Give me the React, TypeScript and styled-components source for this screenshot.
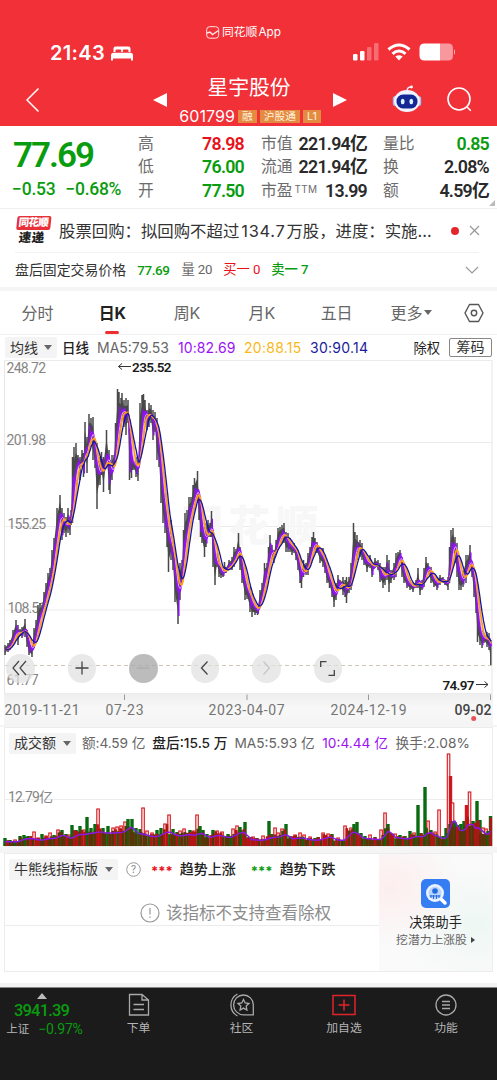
import React from "react";
import styled, { createGlobalStyle } from "styled-components";

const GREEN = "#0a9c0f";
const RED = "#e8111a";
const num = `Roboto, "Noto Sans CJK SC", sans-serif`;
const ui = `Inter, "Noto Sans CJK SC", sans-serif`;

const Global = createGlobalStyle`
  * { box-sizing: border-box; }
  body { margin: 0; background: #fff; font-family: ${ui}; }
  svg { display: block; flex: none; }
`;

const Screen = styled.div`
  width: 497px; height: 1080px; overflow: hidden; background: #fff;
  display: flex; flex-direction: column;
`;

type TextProps = { $size?: number; $color?: string; $weight?: number; $ls?: number; $num?: boolean; $ml?: number; $pt?: number };
const Text = styled.span<TextProps>`
  font-family: ${(p) => (p.$num ? num : ui)};
  font-size: ${(p) => p.$size ?? 14}px;
  color: ${(p) => p.$color ?? "#333"};
  font-weight: ${(p) => p.$weight ?? 400};
  letter-spacing: ${(p) => p.$ls ?? 0}px;
  margin-left: ${(p) => p.$ml ?? 0}px;
  padding-top: ${(p) => p.$pt ?? 0}px;
  line-height: 20px; white-space: nowrap;
`;

/* header */
const Header = styled.header`
  height: 126px; background: #f13038; color: #fff; display: flex; flex-direction: column; flex: none;
`;
const Status = styled.div`
  height: 68px; display: grid; grid-template-columns: 206px 1fr 144px; padding-top: 22px;
`;
const StatusLeft = styled.div`display: flex; align-items: center; padding: 14px 0 0 50px; height: 48px; gap: 6px;`;
const StatusMid = styled.div`display: flex; align-items: center; height: 20px; gap: 2px;`;
const StatusRight = styled.div`display: flex; align-items: center; padding-top: 14px; height: 46px;`;
const TitleBar = styled.div`
  height: 58px; display: grid; grid-template-columns: 153px 194px 150px; align-items: center;
`;
const Back = styled.div`padding-left: 26px; padding-top: 6px;`;
const Center = styled.div`display: flex; align-items: center; justify-content: space-between;`;
const Names = styled.div`display: flex; flex-direction: column; align-items: center; height: 54px;`;
const Title = styled.div`font: 400 20.8px/33px ${ui}; margin-left: -2px; padding-top: 1px;`;
const CodeRow = styled.div`display: flex; align-items: center; gap: 3px; height: 20px; margin-top: 2px;`;
const Tag = styled.span`
  height: 13px; line-height: 13px; padding: 0 4px; background: #e58a41; color: #fff3df; font-size: 10.7px;
  &:first-of-type { margin-left: 3px; }
`;
const Tools = styled.div`display: flex; align-items: center; gap: 25px; padding: 4px 0 0 45px;`;

/* quote */
const Quote = styled.section`
  height: 83px; flex: none; display: grid; grid-template-columns: 126px 106px 105px 106px;
  padding-left: 12px; column-gap: 0; position: relative; border-bottom: 1px solid #f0f0f0;
`;
const PriceBox = styled.div`display: flex; flex-direction: column; padding-top: 10px;`;
const Price = styled.div`
  font: 600 35px/40px ${num}; letter-spacing: -2px; color: ${GREEN}; padding-left: 1px;
`;
const Change = styled.div`display: flex; gap: 10px; margin-top: 3px;`;
const Col = styled.div<{ $ml: number }>`
  margin-left: ${(p) => p.$ml}px; width: 106px; display: flex; flex-direction: column; padding-top: 6.5px;
`;
const Cell = styled.div`display: flex; justify-content: space-between; align-items: center; height: 23.3px;`;
const Sup = styled.sup`font: 400 10px/10px ${ui}; vertical-align: 3px; margin-left: 2px; letter-spacing: .3px;`;
const Corner = styled.div`
  position: absolute; right: 2px; bottom: 2px; border-left: 6px solid transparent; border-bottom: 6px solid #bbb;
`;

const News = styled.section`
  height: 43px; flex: none; display: flex; align-items: center; padding: 0 17px 0 15px;
`;
const Logo = styled.div`width: 35px; height: 30px; display: flex; flex-direction: column; align-items: center; transform: skewX(-6deg);`;
const LogoTop = styled.div`
  width: 34px; height: 14px; border-radius: 2px; background: #e8303a; color: #fff;
  font: 900 10.5px/13px ${ui}; letter-spacing: -.7px; text-align: center;
`;
const LogoBottom = styled.div`font: 900 12.5px/15px ${ui}; color: #222; letter-spacing: .5px;`;
const Dot = styled.i`width: 8px; height: 8px; border-radius: 50%; background: #e3262c; margin-left: auto; margin-right: 10px;`;
const After = styled.section`
  height: 35px; flex: none; display: flex; align-items: center; margin: 0 18px 0 15px; border-top: 1px solid #f3f3f3;
`;
const Band = styled.div<{ $h: number }>`height: ${(p) => p.$h}px; background: #f5f5f5; flex: none;`;

const Tabs = styled.nav`height: 44px; flex: none; display: flex; padding: 0 13px 0 0; border-bottom: 1px solid #f0f0f0;`;
const Tab = styled.div<{ $on?: boolean }>`
  width: 74.8px; display: flex; align-items: center; justify-content: center; position: relative;
  font: ${(p) => (p.$on ? 700 : 400)} 16px/20px ${ui}; color: ${(p) => (p.$on ? "#222" : "#666")};
  letter-spacing: -.2px; gap: 2px;
  &::after { content: ""; display: ${(p) => (p.$on ? "block" : "none")}; position: absolute; bottom: 0; width: 14px; height: 3px; border-radius: 2px; background: #ee2f31; }
`;
const TabEnd = styled.div`margin-left: auto; display: flex; align-items: center;`;

const Legend = styled.div`height: 25px; flex: none; display: flex; align-items: center; padding: 0 5px;`;
const Picker = styled.div<{ $w: number; $h: number }>`
  width: ${(p) => p.$w}px; height: ${(p) => p.$h}px; background: #f4f4f4; display: flex; align-items: center; justify-content: space-between;
  padding: 0 5px 0 5px; border-radius: 2px; font: 400 14px/20px ${ui}; color: #333; white-space: nowrap; flex: none;
`;
const Caret = styled.i`border: 4px solid transparent; border-top: 5px solid #666; border-bottom: 0;`;
const Chips = styled.div`
  width: 43px; height: 19px; border: 1px solid #888; border-radius: 2px; font: 400 14px/16px ${ui}; text-align: center; color: #333; margin-left: 9px;
`;

const ChartBox = styled.section`height: 365px; flex: none; position: relative;`;
const Controls = styled.div`position: absolute; left: 6px; top: 294px; display: flex; gap: 33px;`;
const Round = styled.div<{ $dark?: boolean }>`
  width: 28.5px; height: 28.5px; border-radius: 50%; background: ${(p) => (p.$dark ? "rgba(165,165,165,.75)" : "rgba(225,225,225,.72)")};
  display: flex; align-items: center; justify-content: center;
`;

const Panel = styled.section<{ $h: number }>`
  height: ${(p) => p.$h}px; flex: none; margin: 0 4px; border: 1px solid #ececec; position: relative;
`;
const PanelHead = styled.div`display: flex; align-items: center; height: 30px; padding-left: 4px;`;
const VolPlot = styled.div`margin-left: -5px; margin-top: -29px;`;
const Indicator = styled.div`display: grid; grid-template-columns: 1fr 113px; height: 117px;`;
const Left = styled.div`display: flex; flex-direction: column;`;
const Notice = styled.div`
  height: 42px; border-bottom: 1px solid #ececec; display: flex; align-items: center; padding-left: 135px; padding-top: 17px; padding-bottom: 0; gap: 6px;
`;
const Promo = styled.div`
  background: radial-gradient(ellipse at 10% 28%, #fdeeee 0, transparent 50%), radial-gradient(ellipse at 85% 60%, #eef7f3 0, transparent 60%), #fafafa;
  display: flex; flex-direction: column; align-items: center; padding-top: 25px;
`;
const PromoSub = styled.div`display: flex; align-items: center; gap: 4px; margin-top: -2px;`;
const Right = styled.i<{ $s: number; $c: string }>`
  border: ${(p) => p.$s}px solid transparent; border-left: ${(p) => p.$s * 1.2}px solid ${(p) => p.$c}; border-right: 0;
`;

const BottomBand = styled.div`height: 15px; flex: none; background: linear-gradient(#fff 0 11px, #f2f2f2 11px);`;
const Nav = styled.footer`
  flex: 1; background: #1b1b1b; display: grid; grid-template-columns: 87px 103px 103px 102px 102px; border-top: 1px solid #888;
`;
const Index = styled.div`display: flex; flex-direction: column; align-items: center; padding-top: 5px; width: 83px;`;
const Up = styled.i`border: 5px solid transparent; border-bottom: 6px solid #bbb; border-top: 0;`;
const IndexSub = styled.div`margin: -2px 0 0 6px; display: flex; align-items: center; gap: 9px;`;
const NavItem = styled.div`display: flex; flex-direction: column; align-items: center; padding-top: 5px; gap: 1px;`;

// samples: x, high y, low y
const K = `5 645 655,8 643 652,10 640 650,13 630 646,16 620 638,18 625 645,20 629 636,22 627 638,25 619 637,27 630 647,29 640 655,32 645 657,34 628 648,36 620 643,38 605 637,40 603 623,42 605 617,44 592 608,46 583 604,48 573 597,50 568 590,52 550 580,54 538 562,57 508 547,60 495 523,62 508 540,64 513 533,66 517 537,68 508 533,70 517 535,71 510 525,72.5 457 523,74 447 507,76 443 487,78 455 467,80 457 480,82 450 467,83.5 453 477,85 422 460,87 437 473,89 414 453,91 418 443,93 417 460,95 443 468,97 443 509,100 457 485,101.5 452 475,103.5 457 492,106.5 430 467,109 450 490,110 460 494,112 455 480,114 455 467,115.5 423 463,117.5 389 453,119 392 440,121 398 427,122 393 420,124 400 427,126 398 435,128 400 423,129.5 430 480,131.5 447 478,133 457 470,136 457 477,138 460 481,140 403 460,142 395 443,143.5 394 427,145 400 423,147 410 430,149 403 427,151 405 423,153 410 440,155 412 432,157 418 460,159 433 467,161 460 503,163 477 523,165 493 533,167 507 547,168.5 520 572,171 520 560,173 547 570,175 557 602,178 570 624,180 563 600,182 560 583,183.5 530 563,185 513 557,187 510 547,189 497 530,191 497 520,193 485 513,194.5 478 510,197.5 471 503,199 493 520,200.5 503 537,202 523 543,204.5 527 557,206 523 547,208 520 537,210 523 537,211.5 511 537,213 530 567,215 550 585,217 553 567,219 560 577,221 567 578,223 570 577,224.5 562 573,226 567 573,229 560 570,232 557 570,234 547 567,236 549 560,238.5 533 557,240 547 570,242 557 583,245 577 600,247 581 599,250 587 612,252 593 617,255 603 615,257.5 607 615,260 590 607,262 583 603,264.5 563 590,267 563 580,268.5 547 563,270 535 563,272 545 560,274 550 563,276 540 553,278 528 550,280 527 543,282 525 543,284 523 543,286 532 552,288 533 552,290 538 552,292 543 555,294 543 553,296 548 560,298 553 570,300 563 583,301.5 567 588,303.5 560 577,306 563 575,308 553 575,310 547 560,312 537 553,313.5 532 550,315 538 553,317 542 553,320 548 563,323 548 567,325 560 573,327 567 583,329.5 573 588,332 580 597,334 587 607,336 583 600,338 575 590,340 580 588,343 577 595,345 580 597,346.5 577 603,349 577 593,351 563 590,353.5 523 577,355 532 563,357 535 560,360 540 557,362 543 560,364 550 565,367 557 572,370 555 568,372 563 577,375 558 568,378 560 570,380 563 582,383 567 588,385 567 585,387 555 580,389 560 592,391 570 583,394 563 580,396 553 577,398 552 563,400 550 560,402 557 577,404 567 583,407 577 588,410 580 590,413 583 592,416 580 588,418 568 588,420 582 595,422 580 590,424 568 587,426 557 578,428 563 573,431 567 583,434 577 587,437 577 590,440 575 585,443 577 583,445 580 585,448 577 590,449.5 547 583,451 530 570,453 528 553,455 537 563,457 543 577,459 563 590,461 573 590,463 570 587,466 555 583,468 555 573,470 545 570,472 563 577,474 570 597,476 590 613,477.5 603 642,480 623 645,482 630 648,484 633 643,487 632 647,489 633 650,490.8 640 665`
  .split(",").map((s) => s.split(" ").map(Number));

const midAt = (x: number) => {
  if (x <= K[0][0]) return (K[0][1] + K[0][2]) / 2;
  for (let i = 1; i < K.length; i++) {
    if (x <= K[i][0]) {
      const a = K[i - 1], b = K[i], t = (x - a[0]) / (b[0] - a[0]);
      return ((a[1] + a[2]) * (1 - t) + (b[1] + b[2]) * t) / 2;
    }
  }
  const l = K[K.length - 1];
  return (l[1] + l[2]) / 2;
};
const average = (span: number) => {
  let d = "";
  for (let x = 5; x <= 491; x += 0.75) {
    let s = 0;
    for (let j = 0; j <= 8; j++) s += midAt(x - (span * j) / 8);
    d += `${d ? "L" : "M"}${x.toFixed(1)} ${(s / 9).toFixed(1)}`;
  }
  return d;
};
const wicks = K.map(([x, h, l]) => `M${x} ${h}V${l}`).join("");
const body =
  "M" + K.map(([x, h, l]) => `${x} ${(h + (l - h) * 0.22).toFixed(1)}`).join("L") +
  "L" + [...K].reverse().map(([x, h, l]) => `${x} ${(l - (l - h) * 0.22).toFixed(1)}`).join("L") + "Z";
const jumps = K.filter((_, i) => i % 3 === 1).map(([x, h, l]) => `M${x + 0.8} ${h + (l - h) * 0.3}V${l - (l - h) * 0.15}`).join("");

const PriceChart = () => (
  <svg width="497" height="365" viewBox="0 360 497 365" fontFamily={num}>
    <defs>
      <linearGradient id="axis" x1="0" x2="0" y1="0" y2="1">
        <stop offset="0" stopColor="#eeeeee" /><stop offset=".5" stopColor="#f8f8f8" /><stop offset="1" stopColor="#f4f4f4" />
      </linearGradient>
    </defs>
    <rect x="4" y="693" width="489" height="32" fill="url(#axis)" />
    <path d="M4.5 360V693M492 360V693" stroke="#e6e6e6" fill="none" />
    <path d="M4 360.5H492M4 442.5H492M4 526.5H492M4 610H492M4 693.5H492" stroke="#ebebeb" fill="none" />
    <text x="181" y="541" fontFamily={ui} fontSize="42" fontWeight="900" fill="#f7f7f7" textLength="137">同花顺</text>
    <path d="M5 665.5H492" stroke="#cfc9b4" strokeDasharray="4 3" />
    <g fontSize="14" fill="#858585">
      <text x="6.5" y="373" textLength="39.5">248.72</text>
      <text x="6.5" y="445" textLength="39.5">201.98</text>
      <text x="7.5" y="529" textLength="38.5">155.25</text>
      <text x="7.5" y="613" textLength="38.5">108.51</text>
      <text x="6.5" y="684.5" textLength="32">61.77</text>
    </g>
    <path d={body} fill="#484848" />
    <path d={wicks} stroke="#484848" strokeWidth="1.5" fill="none" />
    <g fill="none" strokeLinejoin="round">
      <path d={jumps} stroke="#8a12ea" strokeWidth="1.5" />
      <path d={average(2.6)} stroke="#8f14ee" strokeWidth="2.4" />
      <path d={average(4.6)} stroke="#efa7e6" strokeWidth="1" />
      <path d={average(6.6)} stroke="#ffa012" strokeWidth="1.7" />
      <path d={average(9.4)} stroke="#1414a8" strokeWidth="1.3" />
    </g>
    <path d="M118.5 366.5H131M122 363.5L118.5 366.5L122 369.5" stroke="#333" fill="none" />
    <text x="132" y="371.5" fontSize="13.5" fontWeight="600" fill="#1c1c1c" textLength="39.5">235.52</text>
    <text x="442.5" y="689.5" fontSize="13.5" fontWeight="600" fill="#1c1c1c" textLength="32">74.97</text>
    <path d="M476 684.5H488M484.5 681.5L488 684.5L484.5 687.5" stroke="#333" fill="none" />
    <path d="M124.5 694.5V700M247 694.5V700M368.5 694.5V700M490.5 694.5V700" stroke="#999" fill="none" />
    <g fontSize="14" fill="#757575">
      <text x="4.5" y="715" textLength="75">2019-11-21</text>
      <text x="105.5" y="715" textLength="38">07-23</text>
      <text x="208.5" y="715" textLength="76">2023-04-07</text>
      <text x="330.5" y="715" textLength="76">2024-12-19</text>
      <text x="454.5" y="715" textLength="37" fill="#444" fontWeight="500">09-02</text>
    </g>
    <circle cx="473.7" cy="718.5" r="2.5" fill="#ea5257" />
  </svg>
);

// turnover: x, bar height, r = hollow red / g = solid green
const V = "5 8 g,10 6 g,15 6 r,20 10 g,24 11 g,28 10 g,34 14 r,38 8 r,42 12 g,46 10 r,50 13 r,54 11 g,58 16 r,62 16 g,66 12 g,69 11 r,72 21 g,76 16 g,80 20 g,84 16 r,87 29 g,91 18 g,95 22 g,98 37 r,103 18 g,108 20 g,113 18 r,117 19 r,121 20 r,125 24 r,128 27 g,132 27 g,136 18 g,140 17 g,143 38 r,147 15 r,152 13 r,157 16 g,161 18 g,165 22 r,169 31 r,173 17 g,177 14 g,180 15 r,184 17 r,190 16 g,194 15 r,197 31 r,200 20 g,203 16 g,207 12 g,213 16 g,217 15 r,222 14 r,228 12 g,233 17 r,237 20 r,240 19 g,245 24 g,249 9 g,253 9 r,257 8 g,263 10 r,269 25 g,272 12 g,275 18 r,278 13 r,282 17 r,286 22 g,290 10 g,295 11 r,300 13 r,304 11 r,310 9 r,315 8 g,318 9 g,323 13 r,328 12 r,332 12 g,338 8 r,345 20 r,351 18 r,354 22 g,357 24 g,361 13 g,365 10 g,370 11 r,375 9 g,381 16 r,385 33 r,388 22 g,391 13 g,395 12 r,400 11 g,405 10 g,410 15 g,414 13 r,418 41 g,421 13 g,425 59 g,428 25 r,431 16 g,435 14 r,439 36 r,443 10 g,446 18 g,448.5 92 r,450.5 70 s,452.5 43 r,455 24 g,458 21 g,461 22 g,464 25 g,466.5 41 s,469.5 54 r,473 25 g,477 45 g,480 26 g,483 18 r,486 17 r,488 15 g,490.5 30 g"
  .split(",").map((s) => { const [x, h, c] = s.split(" "); return { x: +x, h: +h, kind: c }; });
const volAt = (x: number) => {
  for (let i = 1; i < V.length; i++)
    if (x <= V[i].x) return Math.min(V[i - 1].h, V[i].h);
  return V[V.length - 1].h;
};
const dense = Array.from({ length: 190 }, (_, i) => {
  const x = 5 + i * 2.57, r = Math.abs(Math.sin(i * 12.9898) * 43758.5) % 1;
  return { x, h: Math.min(volAt(x), 30) * (0.68 + r * 0.32), red: r > 0.68 };
});
const volLine = dense.map((b, i) => {
  let s = 0, n = 0;
  for (let j = Math.max(0, i - 2); j <= i; j++) { s += Math.min(volAt(dense[j].x), 40); n++; }
  return `${i ? "L" : "M"}${b.x.toFixed(1)} ${(846 - (s / n) * 0.72).toFixed(1)}`;
}).join("");
const barColor: Record<string, string> = { g: "#0a6a10", s: "#d0151c" };

const VolumeChart = () => (
  <svg width="497" height="117" viewBox="0 729 497 117">
    <path d="M4 799.500H492" stroke="#ececec" />
    <text x="8" y="802" fontFamily={num} fontSize="14" fill="#858585" textLength="45">12.79亿</text>
    {V.map((b, i) => b.kind === "r"
      ? <rect key={i} x={b.x - 1.2} y={846 - b.h} width="2.5" height={b.h} fill="#fff0f0" stroke="#d2141a" strokeWidth="1.1" />
      : <rect key={i} x={b.x - 1.7} y={846 - b.h} width="3.4" height={b.h} fill={barColor[b.kind]} />)}
    {dense.map((b, i) => (
      <g key={i}>
        <rect x={b.x - 1.35} y={846 - b.h} width="2.7" height={b.h} fill={b.red ? "#b01414" : i % 4 ? "#583408" : "#14600c"} />
        {i % 4 === 0 && <path d={`M${b.x + 1.2} 846v${-b.h * 0.9}`} stroke="#c80f14" strokeWidth="0.9" />}
      </g>
    ))}
    <path d={volLine} fill="none" stroke="#8a18e8" strokeWidth="1.4" />
  </svg>
);

const Robot = () => (
  <svg width="30" height="28" viewBox="0 0 30 28">
    <path d="M15 6Q15 2 19 2" stroke="#eef" strokeWidth="1.3" fill="none" /><circle cx="19.5" cy="2" r="1.4" fill="#fff" />
    <rect x="0.8" y="11" width="5" height="10" rx="2.5" fill="#a9bbea" /><rect x="24.2" y="11" width="5" height="10" rx="2.5" fill="#a9bbea" />
    <ellipse cx="15" cy="16" rx="13" ry="11" fill="#f0f4ff" />
    <rect x="4.500" y="9.500" width="21" height="14" rx="6.500" fill="#132895" />
    <ellipse cx="10.700" cy="16.500" rx="1.900" ry="2.700" fill="#dff3ff" /><ellipse cx="19.300" cy="16.500" rx="1.900" ry="2.700" fill="#dff3ff" />
  </svg>
);

const Item = ({ l, v, c, s }: { l: string; v: string; c?: string; s?: boolean }) => (
  <Cell>
    <Text $size={15.8} $color="#6c6c6c">{l}{s && <Sup>TTM</Sup>}</Text>
    <Text $num $size={17.8} $weight={600} $ls={-0.75} $color={c ?? "#2a2a2a"}>{v}</Text>
  </Cell>
);

const line = { fill: "none", stroke: "#a9a9a9", strokeWidth: 1.3 };

export default function App() {
  return (
    <>
      <Global />
      <Screen>
        <Header>
          <Status>
            <StatusLeft>
              <Text $size={20} $weight={600} $color="#fff" $ls={0.35}>21:43</Text>
              <svg width="22" height="15" viewBox="0 0 22 15" fill="#fff">
                <path d="M2.5 6V2.5Q2.500 .5 4.500 .5H17.500Q19.500 .5 19.500 2.500V6H17.500V4.500Q17.500 3.500 16.500 3.500H12.800Q11.800 3.500 11.800 4.500V6H10.200V4.500Q10.200 3.500 9.200 3.500H5.500Q4.500 3.500 4.500 4.500V6Z" />
                <path d="M2.500 6.800H19.500Q22 6.800 22 9.300V14.500H20V12.500H2V14.500H0V9.300Q0 6.800 2.500 6.800Z" />
              </svg>
            </StatusLeft>
            <StatusMid>
              <svg width="14" height="13" viewBox="0 0 14 13" fill="none" stroke="#ffe5e5" strokeWidth="1">
                <rect x=".7" y=".7" width="12" height="11.500" rx="3" /><path d="M1 7L4 6L6.500 8.500L12.500 4.500" strokeWidth="1.500" />
              </svg>
              <Text $size={11.8} $color="#fff">同花顺<Text $size={11.8} $color="#fff" $ml={1} $ls={0}>App</Text></Text>
            </StatusMid>
            <StatusRight>
              <svg width="102" height="18" viewBox="0 0 102 18" fill="#fff">
                <rect x="0" y="11" width="4.500" height="6.500" rx="1.200" /><rect x="7" y="8" width="4.500" height="9.500" rx="1.200" />
                <rect x="14" y="4" width="4.500" height="13.500" rx="1.200" opacity=".3" /><rect x="21" y="0" width="4.500" height="17.500" rx="1.200" opacity=".3" />
                <g fill="none" stroke="#fff" strokeWidth="3"><path d="M35.500 6.500Q46 -2.500 56.500 6.500" /><path d="M39.500 10.800Q46 5.300 52.500 10.800" /></g>
                <path d="M42.300 13.600Q46 10.700 49.700 13.600L46 17.500Z" />
                <path d="M71.500 .5H87V17.500H71.500Q66.500 17.500 66.500 12.500V5.500Q66.500 .5 71.500 .5Z" />
                <path d="M87 .5H95.500Q100 .5 100 5.500V12.500Q100 17.500 95.500 17.500H87Z" opacity=".5" />
                <path d="M101 6.500Q102.500 7 102.500 9T101 11.500Z" opacity=".6" />
              </svg>
            </StatusRight>
          </Status>
          <TitleBar>
            <Back><svg width="14" height="24" viewBox="0 0 14 24"><path d="M12.500 .5L1 12L12.500 23.500" fill="none" stroke="#fff" strokeWidth="1.500" /></svg></Back>
            <Center>
              <svg width="14" height="21" viewBox="0 -6 14 21"><path d="M0 7L14 0V14Z" fill="#fff" /></svg>
              <Names>
                <Title>星宇股份</Title>
                <CodeRow>
                  <Text $size={16} $color="#fff" $ls={0.1}>601799</Text>
                  <Tag>融</Tag><Tag>沪股通</Tag><Tag>L1</Tag>
                </CodeRow>
              </Names>
              <svg width="14" height="21" viewBox="0 -6 14 21"><path d="M14 7L0 0V14Z" fill="#fff" /></svg>
            </Center>
            <Tools>
              <Robot />
              <svg width="25" height="25" viewBox="0 0 25 25" fill="none" stroke="#fff" strokeWidth="1.600"><circle cx="12" cy="12" r="11" /><path d="M19.800 19.800L23.800 23.800" /></svg>
            </Tools>
          </TitleBar>
        </Header>

        <Quote>
          <PriceBox>
            <Price>77.69</Price>
            <Change>
              <Text $num $size={17.5} $weight={500} $color={GREEN} $ls={-0.2}>−0.53</Text>
              <Text $num $size={17.5} $weight={500} $color={GREEN} $ls={-0.3}>−0.68%</Text>
            </Change>
          </PriceBox>
          <Col $ml={0}><Item l="高" v="78.98" c={RED} /><Item l="低" v="76.00" c={GREEN} /><Item l="开" v="77.50" c={GREEN} /></Col>
          <Col $ml={17}><Item l="市值" v="221.94亿" /><Item l="流通" v="221.94亿" /><Item l="市盈" v="13.99" s /></Col>
          <Col $ml={34}><Item l="量比" v="0.85" c={GREEN} /><Item l="换" v="2.08%" /><Item l="额" v="4.59亿" /></Col>
          <Corner />
        </Quote>

        <News>
          <Logo><LogoTop>同花顺</LogoTop><LogoBottom>速递</LogoBottom></Logo>
          <Text $size={16.400} $ml={9}>股票回购：拟回购不超过<Text $size={16.400} $ml={2} $ls={0.700}>134.7</Text><Text $size={16.400} $ml={1}>万股，进度：实施…</Text></Text>
          <Dot />
          <svg width="11" height="11" viewBox="0 0 11 11"><path d="M1 1L10 10M10 1L1 10" stroke="#999" strokeWidth="1.200" /></svg>
        </News>
        <After>
          <Text $size={13.900}>盘后固定交易价格</Text>
          <Text $num $size={13.500} $weight={500} $color={GREEN} $ml={11} $ls={-0.400}>77.69</Text>
          <Text $num $size={13.300} $color="#666" $ml={12} $ls={-0.200}>量 20</Text>
          <Text $num $size={13.300} $color={RED} $ml={11} $ls={-0.100}>买一 0</Text>
          <Text $num $size={13.300} $color={GREEN} $weight={500} $ml={11} $ls={-0.100}>卖一 7</Text>
          <svg width="14" height="8" viewBox="0 0 14 8" style={{ marginLeft: "auto" }}><path d="M1 1L7 7L13 1" fill="none" stroke="#999" strokeWidth="1.200" /></svg>
        </After>
        <Band $h={4} />

        <Tabs>
          <Tab>分时</Tab><Tab $on>日K</Tab><Tab>周K</Tab><Tab>月K</Tab><Tab>五日</Tab><Tab>更多<Caret /></Tab>
          <TabEnd>
            <svg width="20" height="20" viewBox="0 0 20 20" fill="none" stroke="#555" strokeWidth="1.400"><path d="M5.500 1.500H14.500L19 10L14.500 18.500H5.500L1 10Z" strokeLinejoin="round" /><circle cx="10" cy="10" r="2.700" /></svg>
          </TabEnd>
        </Tabs>
        <Legend>
          <Picker $w={52} $h={21}>均线<Caret /></Picker>
          <Text $size={13.500} $ml={5} $color="#222" $weight={500}>日线</Text>
          <Text $size={14} $ml={8} $color="#666">MA5:79.53</Text>
          <Text $size={14} $ml={9} $color="#9a12f5" $ls={0.100}>10:82.69</Text>
          <Text $size={14} $ml={8.500} $color="#fbb719" $ls={0.250}>20:88.15</Text>
          <Text $size={14} $ml={8.500} $color="#1b1b9e" $ls={0.250}>30:90.14</Text>
          <Text $size={13.300} style={{ marginLeft: "auto" }} $color="#222">除权</Text>
          <Chips>筹码</Chips>
        </Legend>
        <ChartBox>
          <PriceChart />
          <Controls>
            <Round><svg width="16" height="16" viewBox="0 0 16 16" fill="none" stroke="#444" strokeWidth="1.200"><path d="M7 1L1 8L7 15M14 1L8 8L14 15" /></svg></Round>
            <Round><svg width="14" height="14" viewBox="0 0 14 14"><path d="M7 .5V13.500M.5 7H13.500" stroke="#444" strokeWidth="1.300" /></svg></Round>
            <Round $dark><svg width="14" height="14" viewBox="0 0 14 14"><path d="M.5 7H13.500" stroke="#aaa" strokeWidth="1.200" /></svg></Round>
            <Round><svg width="9" height="14" viewBox="0 0 9 14"><path d="M7.500 .5L1.500 7L7.500 13.500" fill="none" stroke="#444" strokeWidth="1.300" /></svg></Round>
            <Round><svg width="9" height="14" viewBox="0 0 9 14"><path d="M1.500 .5L7.500 7L1.500 13.500" fill="none" stroke="#c4c4c4" strokeWidth="1.200" /></svg></Round>
            <Round><svg width="15" height="15" viewBox="0 0 15 15"><path d="M.7 6V.7H6.500M14.300 9V14.300H8.500" fill="none" stroke="#444" strokeWidth="1.300" /></svg></Round>
          </Controls>
        </ChartBox>

        <Band $h={2} />
        <Panel $h={120}>
          <PanelHead>
            <Picker $w={67} $h={21}>成交额<Caret /></Picker>
            <Text $size={13.700} $ml={6} $color="#666" $ls={-0.100}>额:4.59 亿</Text>
            <Text $size={13.700} $ml={7} $color="#222" $weight={500}>盘后:15.5 万</Text>
            <Text $size={13.700} $ml={7} $color="#666">MA5:5.93 亿</Text>
            <Text $size={13.700} $ml={7.500} $color="#9a12f5">10:4.44 亿</Text>
            <Text $size={13.700} $ml={7.500} $color="#666" $ls={0.100}>换手:2.08%</Text>
          </PanelHead>
          <VolPlot><VolumeChart /></VolPlot>
        </Panel>
        <Band $h={6} />
        <Panel $h={119}>
          <Indicator>
            <Left>
              <PanelHead>
                <Picker $w={109} $h={21}>牛熊线指标版<Caret /></Picker>
                <svg width="15" height="15" viewBox="0 0 15 15" style={{ marginLeft: 8 }}><circle cx="7.500" cy="7.500" r="6.800" fill="none" stroke="#999" /><text x="7.500" y="11" textAnchor="middle" fontSize="10" fontFamily={ui} fill="#888">?</text></svg>
                <Text $size={13} $ml={10} $color={RED} $weight={700} $pt={4}>***</Text>
                <Text $size={14} $ml={7} $color="#222" $weight={500}>趋势上涨</Text>
                <Text $size={13} $ml={15} $color={GREEN} $weight={700} $pt={4}>***</Text>
                <Text $size={14} $ml={7} $color="#222" $weight={500}>趋势下跌</Text>
              </PanelHead>
              <Notice>
                <svg width="20" height="20" viewBox="0 0 20 20" fill="none" stroke="#999" strokeWidth="1.200"><circle cx="10" cy="10" r="9" /><path d="M10 5V11.500M10 13.500V15" /></svg>
                <Text $size={16.500} $color="#8c8c8c">该指标不支持查看除权</Text>
              </Notice>
            </Left>
            <Promo>
              <svg width="29" height="29" viewBox="0 0 29 29">
                <rect width="29" height="29" rx="5" fill="#347df2" /><path d="M20 20L24 24" stroke="#fff" strokeWidth="3.500" strokeLinecap="round" />
                <circle cx="14" cy="14" r="9" fill="#eaf3ff" /><circle cx="14" cy="14" r="6.500" fill="#b9d6ff" /><circle cx="14" cy="12" r="2.800" fill="#2469e0" />
                <path d="M8.500 17H19.500M10 16V19M12.500 16V20M15.500 16V20M18 16V19" stroke="#2469e0" fill="none" />
              </svg>
              <Text $size={13.200} $color="#222" $pt={3.5}>决策助手</Text>
              <PromoSub><Text $size={11.800} $color="#666">挖潜力上涨股</Text><Right $s={3.500} $c="#444" /></PromoSub>
            </Promo>
          </Indicator>
        </Panel>
        <BottomBand />

        <Nav>
          <Index>
            <Up />
            <Text $num $size={16.500} $weight={500} $color={GREEN} $ls={-0.850} $pt={2}>3941.39</Text>
            <IndexSub>
              <Text $num $size={11.500} $color="#b5b5b5">上证</Text>
              <Text $num $size={14} $color={GREEN} $ls={-0.200}>−0.97%</Text>
            </IndexSub>
          </Index>
          <NavItem>
            <svg width="22" height="24" viewBox="0 0 22 24" {...line}><path d="M1.500 1.500H14L20.500 7V22H1.500ZM14 1.500V7H20.500M5.500 11.500H16M5.500 16.500H16" /></svg>
            <Text $size={11.800} $color="#b5b5b5">下单</Text>
          </NavItem>
          <NavItem>
            <svg width="26" height="24" viewBox="0 0 26 24" {...line}>
              <path d="M14.500 2A9.800 9.800 0 0 0 14.500 21.800H24.300V11.800A9.800 9.800 0 0 0 14.500 2Z" />
              <path d="M8.500 1A12.500 12.500 0 0 0 8.500 23" />
              <path d="M14.500 6.500L16.200 10L20 10.500L17.200 13.100L17.900 17L14.500 15.100L11.100 17L11.800 13.100L9 10.500L12.800 10Z" />
            </svg>
            <Text $size={11.800} $color="#b5b5b5">社区</Text>
          </NavItem>
          <NavItem>
            <svg width="24" height="24" viewBox="0 0 24 24" fill="none" stroke="#e0242a" strokeWidth="1.500"><path d="M1 2.500H23V21.500H1ZM12 6.500V17.500M6.500 12H17.500" /></svg>
            <Text $size={11.800} $color="#b5b5b5">加自选</Text>
          </NavItem>
          <NavItem>
            <svg width="24" height="24" viewBox="0 0 24 24" {...line}><circle cx="12" cy="12" r="10" /><path d="M8 8.500H16M8 12H16M8 15.500H16" /></svg>
            <Text $size={11.800} $color="#b5b5b5">功能</Text>
          </NavItem>
        </Nav>
      </Screen>
    </>
  );
}
